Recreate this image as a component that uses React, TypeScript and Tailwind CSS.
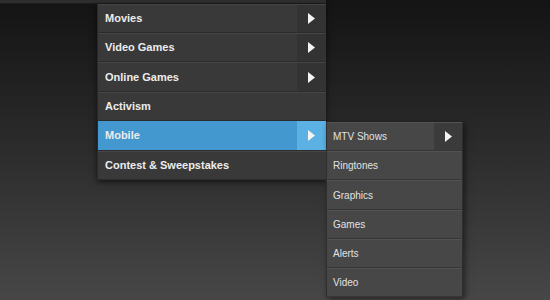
import React from "react";

type Item = { label: string; arrow?: boolean; active?: boolean; h: string };

const main: Item[] = [
  { label: "Movies", arrow: true, h: "h-[29px]" },
  { label: "Video Games", arrow: true, h: "h-[29px]" },
  { label: "Online Games", arrow: true, h: "h-[30px]" },
  { label: "Activism", h: "h-[29px]" },
  { label: "Mobile", arrow: true, active: true, h: "h-[30px]" },
  { label: "Contest & Sweepstakes", h: "h-[29px]" },
];

const sub: Item[] = [
  { label: "MTV Shows", arrow: true, h: "h-[29px]" },
  { label: "Ringtones", h: "h-[29px]" },
  { label: "Graphics", h: "h-[30px]" },
  { label: "Games", h: "h-[29px]" },
  { label: "Alerts", h: "h-[29px]" },
  { label: "Video", h: "h-[29px]" },
];

function Tri() {
  return (
    <svg width="7" height="11" viewBox="0 0 7 11" className="block">
      <path d="M0 0 L7 5.5 L0 11 Z" fill="#f4f4f4" />
    </svg>
  );
}

function SubMenu() {
  return (
    <div className="absolute left-[228px] top-[1px] w-[137px] flex flex-col bg-[#474747] border-x border-[#2e2e2e] shadow-[2px_2px_6px_rgba(0,0,0,0.5)]">
      {sub.map((s) => (
        <div
          key={s.label}
          className={`${s.h} flex items-stretch border-t border-t-[#535353] border-b border-b-[#363636]`}
        >
          <div className="flex-1 flex items-center pl-[6px] text-[10px] text-[#e2e2e2] font-['Liberation_Sans',Arial,sans-serif]">
            {s.label}
          </div>
          {s.arrow && (
            <div className="w-[28px] flex items-center justify-center bg-[#3b3b3b]">
              <Tri />
            </div>
          )}
        </div>
      ))}
    </div>
  );
}

export default function App() {
  return (
    <div className="w-[550px] h-[300px] overflow-hidden bg-gradient-to-b from-[#141414] via-[#2c2c2c] to-[#474747] font-['Liberation_Sans',Arial,sans-serif]">
      <div className="h-[4px] w-[326px] bg-[#2e2e2e] border-b border-[#1c1c1c]" />
      <div className="ml-[97px] w-[229px] flex flex-col bg-[#383838] border-l border-[#2a2a2a] shadow-[0_2px_6px_rgba(0,0,0,0.6)]">
        {main.map((m) => (
          <div
            key={m.label}
            className={`relative ${m.h} flex items-stretch border-b ${
              m.active
                ? "border-b-[#2c2c2c] bg-[#4498d0]"
                : "border-t border-t-[#454545] border-b-[#2c2c2c] bg-[#393939]"
            }`}
          >
            <div className="flex-1 flex items-center pl-[7px] text-[11px] font-bold text-[#ececec]">
              {m.label}
            </div>
            {m.arrow && (
              <div
                className={`w-[29px] flex items-center justify-center ${
                  m.active ? "bg-[#5cb1e4]" : "bg-[#333333]"
                }`}
              >
                <Tri />
              </div>
            )}
            {m.active && <SubMenu />}
          </div>
        ))}
      </div>
    </div>
  );
}
